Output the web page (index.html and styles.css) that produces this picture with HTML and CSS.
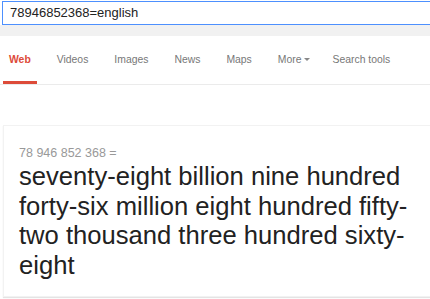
FILE: index.html
```html
<!DOCTYPE html>
<html>
<head>
<meta charset="utf-8">
<link rel="stylesheet" href="styles.css">
</head>
<body>
<div class="searchbar">
  <div class="searchbox">78946852368=english</div>
</div>
<div class="band"></div>
<nav class="tabs">
  <span class="tab active">Web</span>
  <span class="tab">Videos</span>
  <span class="tab">Images</span>
  <span class="tab">News</span>
  <span class="tab">Maps</span>
  <span class="tab more">More<span class="caret"></span></span>
  <span class="tab">Search tools</span>
</nav>
<div class="card">
  <div class="query">78 946 852 368 =</div>
  <div class="answer">seventy-eight billion nine hundred forty-six million eight hundred fifty-two thousand three hundred sixty-eight</div>
</div>
</body>
</html>
```
FILE: styles.css
```css
html, body { margin: 0; padding: 0; background: #fff; }
body { font-family: "Liberation Sans", Arial, sans-serif; width: 430px; height: 299px; overflow: hidden; }
.searchbar { padding: 1px 0 0 2px; }
.searchbox {
  height: 24px; border: 1px solid #4d90fe; border-right: none;
  box-sizing: border-box; white-space: nowrap;
  font-size: 13px; line-height: 22px; color: #222; padding-left: 7px;
}
.band { height: 11px; background: #f1f1f1; }
.tabs {
  display: flex; gap: 14px; height: 48px; border-bottom: 1px solid #ebebeb;
  padding-left: 3px; white-space: nowrap;
}
.tab {
  font-size: 10.4px; color: #777; line-height: 47px; padding: 0 6px;
  height: 48px; box-sizing: border-box;
}
.tab.active { color: #dd4b39; font-weight: bold; border-bottom: 3px solid #dd4b39; }
.tab.more { padding-right: 3px; }
.caret {
  display: inline-block; width: 0; height: 0;
  border-left: 3px solid transparent; border-right: 3px solid transparent;
  border-top: 3px solid #888; vertical-align: middle; margin: 0 0 1px 2px;
}
.card {
  margin: 40px 0 0 3px; border: 1px solid #f2f2f2; border-right: none;
  box-shadow: 0 1px 1px #e4e4e4; padding: 19px 16px 16px 15px;
}
.query { font-size: 12.5px; color: #999; line-height: 16px; }
.answer { font-size: 25.6px; color: #222; line-height: 29.5px; margin-top: 1px; }
```
